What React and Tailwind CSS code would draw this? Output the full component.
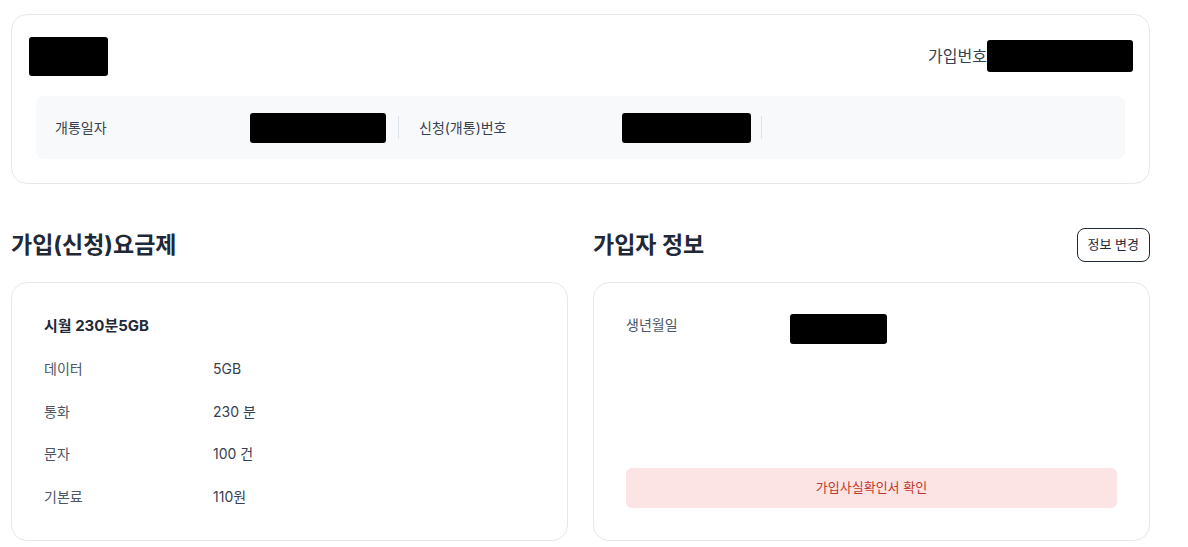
import React from 'react';

const font = { fontFamily: 'Inter, "Noto Sans CJK KR", sans-serif' };

function Redact({ className }) {
  return <div className={`bg-black rounded-[3px] ${className}`} />;
}

const plan = [
  ['데이터', '5GB'],
  ['통화', '230 분'],
  ['문자', '100 건'],
  ['기본료', '110원'],
];

export default function App() {
  return (
    <div className="w-[1188px] h-[547px] bg-white overflow-hidden text-[#1f2937]" style={font}>
      <div className="pl-[11px] pr-[38px] pt-[14px]">
        {/* contract summary */}
        <div className="border border-[#e5e7eb] rounded-2xl pt-[21px] pb-[24px] px-[24px]">
          <div className="flex items-center justify-between h-[40px]">
            <Redact className="w-[79px] h-[39px] -ml-[7px]" />
            <div className="flex items-center text-base text-[#374151] -mr-[8px]">
              <span>가입번호</span>
              <Redact className="w-[146px] h-[32px]" />
            </div>
          </div>
          <div className="mt-[20px] bg-[#f8f9fb] rounded-lg h-[63px] grid grid-cols-3 items-center">
            <div className="flex items-center h-[23px] pl-[19px] border-r border-[#dde3ec]">
              <span className="w-[195px] text-sm text-[#374151]">개통일자</span>
              <Redact className="w-[136px] h-[30px]" />
            </div>
            <div className="flex items-center h-[23px] pl-[20px] border-r border-[#dde3ec]">
              <span className="w-[203px] text-sm text-[#374151]">신청(개통)번호</span>
              <Redact className="w-[129px] h-[30px]" />
            </div>
            <div />
          </div>
        </div>

        <div className="grid grid-cols-2 gap-[25px] mt-[44px]">
          {/* plan */}
          <div>
            <div className="h-[34px] flex items-center">
              <h2 className="text-[23px] font-bold text-[#1f2937]">가입(신청)요금제</h2>
            </div>
            <div className="mt-[20px] border border-[#e5e7eb] rounded-2xl h-[259px] pt-[32px] px-[32px]">
              <div className="text-[15px] font-bold text-[#1f2937] leading-[22px]">시월 230분5GB</div>
              <div className="mt-[11px] flex flex-col">
                {plan.map(([k, v]) => (
                  <div key={k} className="flex items-center h-[42.5px] text-sm">
                    <span className="w-[169px] text-[#4b5563]">{k}</span>
                    <span className="text-[#374151]">{v}</span>
                  </div>
                ))}
              </div>
            </div>
          </div>

          {/* subscriber */}
          <div>
            <div className="h-[34px] flex items-center justify-between">
              <h2 className="text-[23px] font-bold text-[#1f2937]">가입자 정보</h2>
              <button className="h-[34px] px-[10px] border border-[#1f2937] rounded-lg text-[13px] text-[#1f2937]">
                정보 변경
              </button>
            </div>
            <div className="mt-[20px] border border-[#e5e7eb] rounded-2xl h-[259px] pt-[31px] px-[32px] flex flex-col">
              <div className="flex items-start text-sm">
                <span className="w-[164px] text-[#4b5563] leading-[22px]">생년월일</span>
                <Redact className="w-[97px] h-[30px]" />
              </div>
              <button className="mt-auto mb-[32px] h-[40px] w-full bg-[#fde4e4] rounded-md text-[13px] text-[#c0392b]">
                가입사실확인서 확인
              </button>
            </div>
          </div>
        </div>
      </div>
    </div>
  );
}
